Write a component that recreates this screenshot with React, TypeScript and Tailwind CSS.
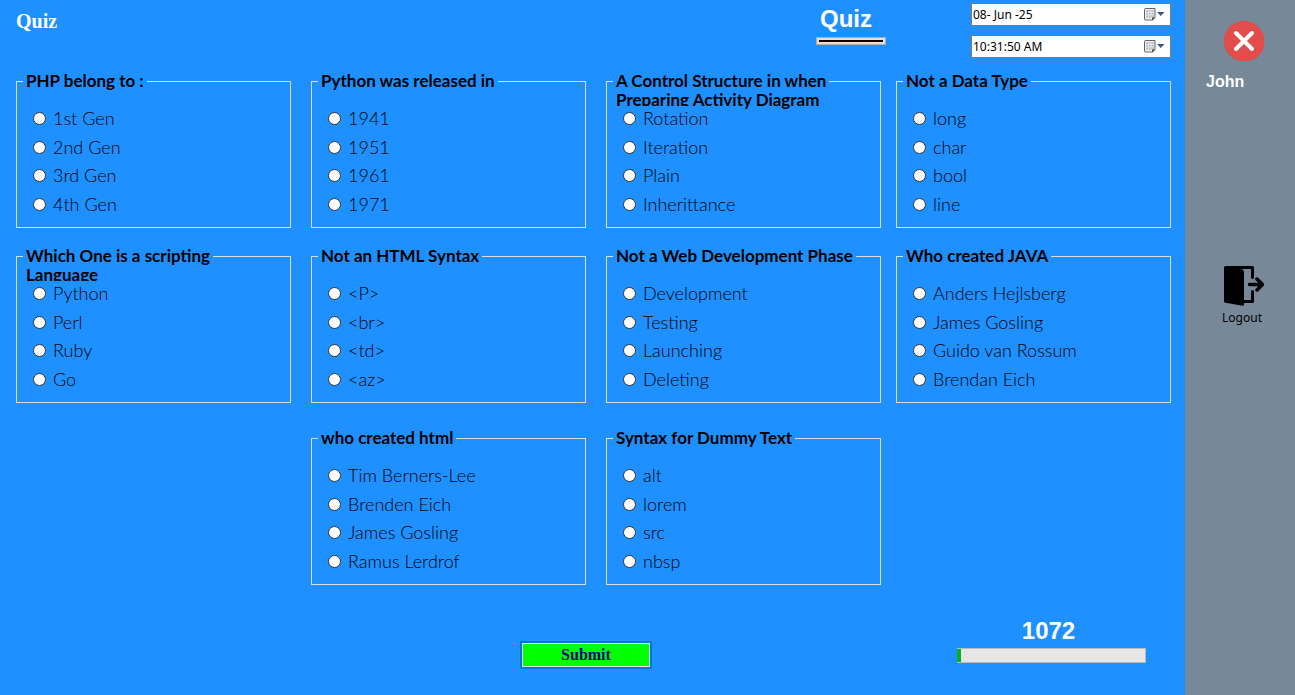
import { useState } from "react";

type Question = { id: string; title: string[]; options: string[]; cell: string };

const questions: Question[] = [
  { id: "php", title: ["PHP belong to :"], options: ["1st Gen", "2nd Gen", "3rd Gen", "4th Gen"], cell: "pr-5" },
  { id: "python", title: ["Python was released in"], options: ["1941", "1951", "1961", "1971"], cell: "pr-5" },
  {
    id: "control",
    title: ["A Control Structure in when", "Preparing Activity Diagram"],
    options: ["Rotation", "Iteration", "Plain", "Inherittance"],
    cell: "pr-[15px]",
  },
  { id: "datatype", title: ["Not a Data Type"], options: ["long", "char", "bool", "line"], cell: "" },
  {
    id: "scripting",
    title: ["Which One is a scripting", "Language"],
    options: ["Python", "Perl", "Ruby", "Go"],
    cell: "pr-5 pt-[18px]",
  },
  { id: "htmlsyntax", title: ["Not an HTML Syntax"], options: ["<P>", "<br>", "<td>", "<az>"], cell: "pr-5 pt-[18px]" },
  {
    id: "phase",
    title: ["Not a Web Development Phase"],
    options: ["Development", "Testing", "Launching", "Deleting"],
    cell: "pr-[15px] pt-[18px]",
  },
  {
    id: "java",
    title: ["Who created JAVA"],
    options: ["Anders Hejlsberg", "James Gosling", "Guido van Rossum", "Brendan Eich"],
    cell: "pt-[18px]",
  },
  {
    id: "html",
    title: ["who created html"],
    options: ["Tim Berners-Lee", "Brenden Eich", "James Gosling", "Ramus Lerdrof"],
    cell: "col-start-2 pr-5 pt-[25px]",
  },
  { id: "dummy", title: ["Syntax for Dummy Text"], options: ["alt", "lorem", "src", "nbsp"], cell: "pr-[15px] pt-[25px]" },
];

function QuestionBox({ question }: { question: Question }) {
  return (
    <fieldset className="min-w-0 border border-[#dcdcdc] px-[6px] pb-[10px] font-['Century_Gothic','Lato',sans-serif] text-black">
      <legend className="h-[21px] px-[3px] text-[17px] font-bold leading-[19px] whitespace-nowrap">
        {question.title.map((line) => (
          <span key={line} className="block">
            {line}
          </span>
        ))}
      </legend>
      <div className="relative ml-[10px] mt-[14px] flex h-[111px] flex-col items-start justify-between">
        {question.options.map((option) => (
          <label
            key={option}
            className="flex h-[25px] items-center gap-[7px] bg-[#1e90ff] text-[18px] font-light leading-[25px]"
          >
            <input
              type="radio"
              name={question.id}
              value={option}
              className="size-[13px] shrink-0 appearance-none rounded-full border border-[#333333] bg-white checked:border-4"
            />
            {option}
          </label>
        ))}
      </div>
    </fieldset>
  );
}

function CalendarIcon() {
  return (
    <svg width="21" height="13" viewBox="0 0 21 13" aria-hidden="true">
      <path d="M1.500 .5h9.500v9l-2.500 2.500h-7q-1 0-1-1v-9.500q0-1 1-1z" fill="#f4f2f2" stroke="#6c5c60" />
      <path d="M2 2h8v8h-8z" fill="#b7c3d0" />
      <path d="M2 4.500h8M2 7h8M4.500 2v8M7 2v8" stroke="#eef1f4" strokeWidth=".7" />
      <path d="M8 12.500v-3h3.500z" fill="#5c4c50" />
      <path d="M13 4h7.500l-3.750 4z" fill="#3f587c" />
    </svg>
  );
}

function PickerField({ label, value }: { label: string; value: string }) {
  return (
    <div className="flex h-[23px] items-center border border-[#7a7a7a] bg-white pl-px pr-[5px]">
      <input
        type="text"
        aria-label={label}
        defaultValue={value}
        className="min-w-0 flex-1 bg-transparent font-['Segoe_UI','Noto_Sans',sans-serif] text-[12px] leading-[20px] text-black outline-none"
      />
      <button type="button" aria-label={`Open ${label}`}>
        <CalendarIcon />
      </button>
    </div>
  );
}

export default function App() {
  const [remaining] = useState(1072);
  const progress = 2;

  return (
    <div className="flex min-h-screen bg-[#1e90ff]">
      <main className="min-w-0 flex-1">
        <header className="flex h-[71px] items-start pl-4 pr-[14px] text-white">
          <h1 className="flex-1 pt-[9px] font-['Old_English_Text_MT','Liberation_Serif',serif] text-[20px] font-bold leading-6">
            Quiz
          </h1>
          <div className="mr-[85px] w-[70px] pt-[5px]">
            <h2 className="pl-1 font-['Liberation_Sans',sans-serif] text-[24px] font-bold leading-7">Quiz</h2>
            <div className="mt-[4px] h-[8px] border border-[#adadad] bg-[#e1e1e1] px-[2px] py-[2px]">
              <div className="h-[2px] bg-black" />
            </div>
          </div>
          <div className="flex w-[200px] flex-col gap-[9px] pt-[3px]">
            <PickerField label="date" value="08- Jun -25" />
            <PickerField label="time" value="10:31:50 AM" />
          </div>
        </header>

        <form onSubmit={(event) => event.preventDefault()}>
          <div className="grid grid-cols-[295fr_295fr_290fr_275fr] pl-4 pr-[14px]">
            {questions.map((question) => (
              <div key={question.id} className={question.cell}>
                <QuestionBox question={question} />
              </div>
            ))}
          </div>

          <div className="mt-8 grid grid-cols-[1fr_132px_1fr] items-start pl-[26px] pr-[39px]">
            <button
              type="submit"
              className="col-start-2 mt-6 h-[28px] border-2 border-[#0078d7] bg-[#00ff00] font-['Liberation_Serif',serif] text-[16px] font-bold leading-[22px] text-[#000080] outline-1 -outline-offset-3 outline-[#e3e3e3]"
            >
              Submit
            </button>
            <div className="w-[189px] justify-self-end">
              <p className="pr-[6px] text-center font-['Liberation_Sans',sans-serif] text-[24px] font-bold leading-7 text-white">
                {remaining}
              </p>
              <div
                role="progressbar"
                aria-label="Quiz progress"
                aria-valuenow={progress}
                aria-valuemin={0}
                aria-valuemax={100}
                className="mt-[3px] h-[15px] border-y border-r border-[#bcbcbc] bg-[#e6e6e6]"
              >
                <div className="h-full bg-[#06b025]" style={{ width: `${progress}%` }} />
              </div>
            </div>
          </div>
        </form>
      </main>

      <aside className="flex w-[110px] shrink-0 flex-col bg-[#778899] pt-[21px]">
        <button type="button" aria-label="Close" className="ml-[39px] size-10">
          <svg viewBox="0 0 40 40" aria-hidden="true">
            <circle cx="20" cy="20" r="20" fill="#d03f3f" />
            <path d="M20 0A20 20 0 0 1 34.500 6.200A19.500 19.500 0 0 1 6.800 35A20 20 0 0 1 20 0z" fill="#e24c4b" />
            <path d="M12 12l16 16M28 12L12 28" stroke="#fff" strokeWidth="4" strokeLinecap="round" />
          </svg>
        </button>
        <p className="mt-[11px] pl-[21px] font-['Liberation_Sans',sans-serif] text-[16px] font-bold leading-5 text-white">
          John
        </p>
        <button
          type="button"
          className="ml-8 mt-[174px] flex w-[50px] flex-col items-center self-start font-['Segoe_UI','Noto_Sans',sans-serif] text-[12px] leading-4 text-black"
        >
          <svg width="40" height="40" viewBox="0 0 40 40" className="ml-1" aria-hidden="true">
            <path d="M1.500 0H13L19 4Q20 4.500 20 6V38.500Q20 40 18.500 39.700L1.500 36.800Q0 36.500 0 35V1.500Q0 0 1.500 0z" />
            <path d="M3 1.500H28.500V11.500M28.500 25.500V35.500H19" fill="none" stroke="#000" strokeWidth="3" strokeLinecap="round" strokeLinejoin="round" />
            <path d="M25.500 18.500H38M33 13L38.500 18.500L33 24" fill="none" stroke="#000" strokeWidth="3.500" strokeLinecap="round" strokeLinejoin="round" />
          </svg>
          <span className="mt-[4px]">Logout</span>
        </button>
      </aside>
    </div>
  );
}
